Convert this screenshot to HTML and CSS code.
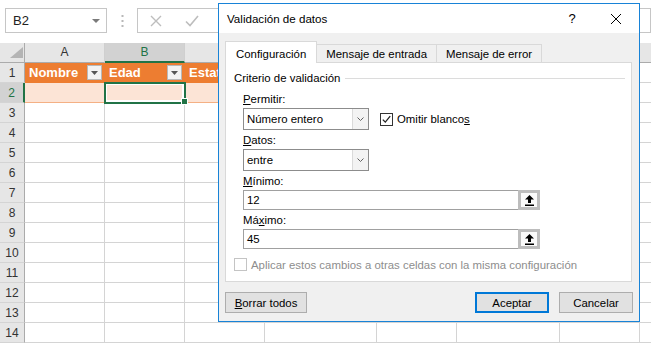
FILE: index.html
```html
<!DOCTYPE html>
<html lang="es">
<head>
  <meta charset="UTF-8">
  <meta name="viewport" content="width=device-width, initial-scale=1.0">
  <title>Validación de datos</title>
  <link rel="stylesheet" href="styles.css">
</head>
<body>
  <div class="sheet">
    <div class="formula-bar">
      <div class="name-box">
        <span>B2</span>
        <svg width="8" height="4" viewBox="0 0 8 4"><path d="M0 0H8L4 4Z" fill="#7a7a7a"/></svg>
      </div>
      <div class="bar-grip">
        <svg width="3" height="12" viewBox="0 0 3 12"><rect x="0.5" y="0" width="2" height="2" fill="#b8b8b8"/><rect x="0.5" y="5" width="2" height="2" fill="#b8b8b8"/><rect x="0.5" y="10" width="2" height="2" fill="#b8b8b8"/></svg>
      </div>
      <div class="formula-box">
        <svg width="12" height="12" viewBox="0 0 12 12"><path d="M1 1L11 11M11 1L1 11" stroke="#bdbdbd" stroke-width="1.4" fill="none"/></svg>
        <svg width="14" height="12" viewBox="0 0 14 12"><path d="M1 6.5L5 10.5L13 1" stroke="#bdbdbd" stroke-width="1.6" fill="none"/></svg>
      </div>
    </div>

    <!-- columns C onward sit under the dialog, so their letters are left out -->
    <div class="grid">
      <div class="row head">
        <div class="corner"><svg width="13" height="11" viewBox="0 0 13 11"><path d="M13 0V11H0Z" fill="#b4b4b4"/></svg></div>
        <div>A</div><div class="sel">B</div><div></div><div></div><div></div><div></div><div></div><div></div>
      </div>
      <div class="row">
        <div class="rh">1</div>
        <div class="th"><span>Nombre</span><span class="filter"><svg width="7" height="4" viewBox="0 0 7 4"><path d="M0 0H7L3.5 4Z" fill="#555"/></svg></span></div>
        <div class="th"><span>Edad</span><span class="filter"><svg width="7" height="4" viewBox="0 0 7 4"><path d="M0 0H7L3.5 4Z" fill="#555"/></svg></span></div>
        <div class="th"><span>Estatura</span><span class="filter"><svg width="7" height="4" viewBox="0 0 7 4"><path d="M0 0H7L3.5 4Z" fill="#555"/></svg></span></div>
        <div></div><div></div><div></div><div></div><div></div>
      </div>
      <div class="row">
        <div class="rh sel">2</div>
        <div class="band"></div>
        <div class="band active"><span class="handle"></span></div>
        <div class="band"></div>
        <div></div><div></div><div></div><div></div><div></div>
      </div>
      <div class="row"><div class="rh">3</div><div></div><div></div><div></div><div></div><div></div><div></div><div></div><div></div></div>
      <div class="row"><div class="rh">4</div><div></div><div></div><div></div><div></div><div></div><div></div><div></div><div></div></div>
      <div class="row"><div class="rh">5</div><div></div><div></div><div></div><div></div><div></div><div></div><div></div><div></div></div>
      <div class="row"><div class="rh">6</div><div></div><div></div><div></div><div></div><div></div><div></div><div></div><div></div></div>
      <div class="row"><div class="rh">7</div><div></div><div></div><div></div><div></div><div></div><div></div><div></div><div></div></div>
      <div class="row"><div class="rh">8</div><div></div><div></div><div></div><div></div><div></div><div></div><div></div><div></div></div>
      <div class="row"><div class="rh">9</div><div></div><div></div><div></div><div></div><div></div><div></div><div></div><div></div></div>
      <div class="row"><div class="rh">10</div><div></div><div></div><div></div><div></div><div></div><div></div><div></div><div></div></div>
      <div class="row"><div class="rh">11</div><div></div><div></div><div></div><div></div><div></div><div></div><div></div><div></div></div>
      <div class="row"><div class="rh">12</div><div></div><div></div><div></div><div></div><div></div><div></div><div></div><div></div></div>
      <div class="row"><div class="rh">13</div><div></div><div></div><div></div><div></div><div></div><div></div><div></div><div></div></div>
      <div class="row"><div class="rh">14</div><div></div><div></div><div></div><div></div><div></div><div></div><div></div><div></div></div>
    </div>
  </div>

  <div class="dialog">
    <div class="title-bar">
      <span class="title">Validación de datos</span>
      <span class="title-btn">?</span>
      <span class="title-btn">
        <svg width="10" height="10" viewBox="0 0 10 10"><path d="M0 0L10 10M10 0L0 10" stroke="#000" stroke-width="1" fill="none"/></svg>
      </span>
    </div>

    <div class="dialog-body">
      <div class="tabs">
        <span class="tab active">Configuración</span>
        <span class="tab">Mensaje de entrada</span>
        <span class="tab">Mensaje de error</span>
      </div>

      <div class="panel">
        <div class="legend">Criterio de validación</div>

        <div class="fields">
          <div class="label first"><u>P</u>ermitir:</div>
          <div class="select-row">
            <div class="select">
              <span class="select-value">Número entero</span>
              <span class="select-arrow"><svg width="7" height="4" viewBox="0 0 7 4"><path d="M0.5 0.5L3.5 3.5L6.5 0.5" stroke="#606060" fill="none"/></svg></span>
            </div>
            <span class="check-label">
              <span class="check"><svg width="9" height="9" viewBox="0 0 9 9"><path d="M0.8 4.6L3.3 7.1L8.2 1.2" stroke="#222" stroke-width="1.3" fill="none"/></svg></span>
              <span>Omitir blanco<u>s</u></span>
            </span>
          </div>

          <div class="label"><u>D</u>atos:</div>
          <div class="select field-box">
            <span class="select-value">entre</span>
            <span class="select-arrow"><svg width="7" height="4" viewBox="0 0 7 4"><path d="M0.5 0.5L3.5 3.5L6.5 0.5" stroke="#606060" fill="none"/></svg></span>
          </div>

          <div class="label"><u>M</u>ínimo:</div>
          <div class="range-input field-box">
            <span class="range-value">12</span>
            <span class="range-btn"><svg width="9" height="11" viewBox="0 0 9 11"><path d="M4.5 0L9 4.5H6V8H3V4.5H0Z" fill="#000"/><rect x="0" y="9.5" width="9" height="1.5" fill="#000"/></svg></span>
          </div>

          <div class="label">Má<u>x</u>imo:</div>
          <div class="range-input field-box">
            <span class="range-value">45</span>
            <span class="range-btn"><svg width="9" height="11" viewBox="0 0 9 11"><path d="M4.5 0L9 4.5H6V8H3V4.5H0Z" fill="#000"/><rect x="0" y="9.5" width="9" height="1.5" fill="#000"/></svg></span>
          </div>
        </div>

        <div class="apply">
          <span class="check off"></span>
          <span>Aplicar estos cambios a otras celdas con la misma configuración</span>
        </div>
      </div>

      <div class="buttons">
        <button class="btn wide"><u>B</u>orrar todos</button>
        <button class="btn primary">Aceptar</button>
        <button class="btn">Cancelar</button>
      </div>
    </div>
  </div>
</body>
</html>
```

FILE: styles.css
```css
* {
  box-sizing: border-box;
}
body {
  margin: 0;
  width: 651px;
  height: 344px;
  overflow: hidden;
  position: relative;
  background: #fff;
  font-family: "Liberation Sans", Arial, sans-serif;
  color: #000;
}

/* formula bar */
.formula-bar {
  display: flex;
  height: 43px;
  padding: 8px 0 0 5px;
}
.name-box {
  width: 102px;
  height: 25px;
  border: 1px solid #c6c6c6;
  display: flex;
  align-items: center;
  justify-content: space-between;
  padding: 0 6px 0 7px;
  font-size: 13px;
  color: #222;
}
.bar-grip {
  width: 30px;
  height: 25px;
  display: flex;
  align-items: center;
  justify-content: center;
}
.formula-box {
  flex: 1;
  height: 25px;
  border: 1px solid #c6c6c6;
  display: flex;
  align-items: center;
  padding-left: 12px;
  gap: 23px;
}

/* grid */
.row {
  display: flex;
  height: 20px;
}
.row > div {
  flex: none;
  height: 20px;
  border-right: 1px solid #d4d4d4;
  border-bottom: 1px solid #d4d4d4;
}
.row > :nth-child(1) { width: 25px; }
.row > :nth-child(2),
.row > :nth-child(3),
.row > :nth-child(4) { width: 80px; }
.row > :nth-child(5) { width: 112px; }
.row > :nth-child(6) { width: 80px; }
.row > :nth-child(7) { width: 103px; }
.row > :nth-child(8) { width: 80px; }
.row > :nth-child(9) { width: 11px; border-right: none; }

.head > div {
  background: #e6e6e6;
  border-right-color: #cfcfcf;
  border-bottom-color: #ababab;
  text-align: center;
  font-size: 12px;
  line-height: 19px;
  color: #333;
}
.head > .corner {
  display: flex;
  align-items: flex-end;
  justify-content: flex-end;
  padding: 0 1px 4px 0;
  border-right-color: #ababab;
}
.head > .sel {
  background: #d2d2d2;
  color: #217346;
  border-bottom: 2px solid #217346;
}
.row > .rh {
  background: #e6e6e6;
  border-right-color: #ababab;
  text-align: center;
  font-size: 12px;
  line-height: 20px;
  color: #333;
}
.row > .rh.sel {
  background: #d2d2d2;
  color: #217346;
  border-right: 2px solid #217346;
}
.row > .th {
  background: #ed7d31;
  border-right-color: #ed7d31;
  border-bottom-color: #ed7d31;
  color: #fff;
  font-weight: bold;
  font-size: 13px;
  display: flex;
  align-items: center;
  justify-content: space-between;
  padding: 0 2px 0 4px;
  overflow: hidden;
}
.filter {
  width: 15px;
  height: 15px;
  background: #f2f2f2;
  border: 1px solid #b8b8b8;
  display: flex;
  align-items: center;
  justify-content: center;
}
.row > .band {
  background: #fce4d6;
  border-right-color: #fce4d6;
  border-bottom-color: #f4b084;
}
.row > .band.active {
  position: relative;
  outline: 2px solid #217346;
  outline-offset: -1px;
  box-shadow: inset 0 0 0 2px #fff;
}
.handle {
  position: absolute;
  right: -4px;
  bottom: -3px;
  width: 7px;
  height: 7px;
  background: #217346;
  border: 1px solid #fff;
  z-index: 1;
}

/* dialog window */
.dialog {
  position: absolute;
  left: 218px;
  top: 3px;
  width: 422px;
  height: 319px;
  border: 1px solid #1883d7;
  background: #f0f0f0;
  display: flex;
  flex-direction: column;
  font-size: 11.4px;
}
.title-bar {
  height: 29px;
  flex: none;
  background: #fff;
  display: flex;
  align-items: center;
  padding: 0 1px 0 8px;
  font-size: 11.6px;
}
.title {
  flex: 1;
}
.title-btn {
  width: 44px;
  height: 29px;
  display: flex;
  align-items: center;
  justify-content: center;
  font-size: 13px;
}
.dialog-body {
  flex: 1;
  padding: 8px 7px 0 6px;
}

.tabs {
  display: flex;
  align-items: flex-start;
  height: 21px;
}
.tab {
  height: 18px;
  margin-top: 3px;
  padding: 1px 9px 0;
  border: 1px solid #d9d9d9;
  border-bottom: none;
  background: #f0f0f0;
  display: flex;
  align-items: center;
}
.tab + .tab {
  margin-left: -1px;
}
.tab.active {
  height: 22px;
  margin-top: 0;
  padding: 2px 10px 0;
  background: #fff;
  position: relative;
  z-index: 1;
}

.panel {
  height: 220px;
  background: #fff;
  border: 1px solid #d9d9d9;
  padding: 8px 6px 0 8px;
}
.legend {
  display: flex;
  align-items: center;
  gap: 5px;
  height: 14px;
}
.legend::after {
  content: "";
  flex: 1;
  border-top: 1px solid #dcdcdc;
}
.fields {
  padding-left: 9px;
}
.label {
  height: 14px;
  line-height: 14px;
  margin-top: 3px;
}
.label.first {
  margin-top: 7px;
}
.field-box {
  margin-top: 2px;
}
.select-row {
  display: flex;
  align-items: center;
  margin-top: 2px;
}
.select {
  width: 126px;
  height: 22px;
  border: 1px solid #8c8c8c;
  display: flex;
  align-items: stretch;
}
.select-value {
  flex: 1;
  padding-left: 3px;
  display: flex;
  align-items: center;
}
.select-arrow {
  width: 16px;
  border-left: 1px solid #dadada;
  background: #f3f3f3;
  display: flex;
  align-items: center;
  justify-content: center;
}
.check-label {
  display: flex;
  align-items: center;
  gap: 4px;
  margin-left: 11px;
}
.check {
  width: 13px;
  height: 13px;
  border: 1px solid #333;
  background: #fff;
  display: flex;
  align-items: center;
  justify-content: center;
}
.check.off {
  border-color: #c4c4c4;
}
.range-input {
  width: 297px;
  height: 20px;
  border: 1px solid #a0a0a0;
  display: flex;
}
.range-value {
  flex: 1;
  padding-left: 3px;
  display: flex;
  align-items: center;
}
.range-btn {
  width: 22px;
  margin: -1px -1px -1px 0;
  border: 3px solid #bdbdbd;
  background: #fafafa;
  display: flex;
  align-items: center;
  justify-content: center;
}
.apply {
  display: flex;
  align-items: center;
  gap: 4px;
  height: 13px;
  margin-top: 9px;
  color: #8d8d8d;
}

.buttons {
  display: flex;
  gap: 10px;
  margin: 10px -1px 0 0;
}
.btn {
  width: 74px;
  height: 21px;
  padding: 0;
  border: 1px solid #adadad;
  background: #e1e1e1;
  font: inherit;
  color: #000;
}
.btn.wide {
  width: 82px;
}
.btn.primary {
  margin-left: auto;
  border: 2px solid #0078d7;
}
```
